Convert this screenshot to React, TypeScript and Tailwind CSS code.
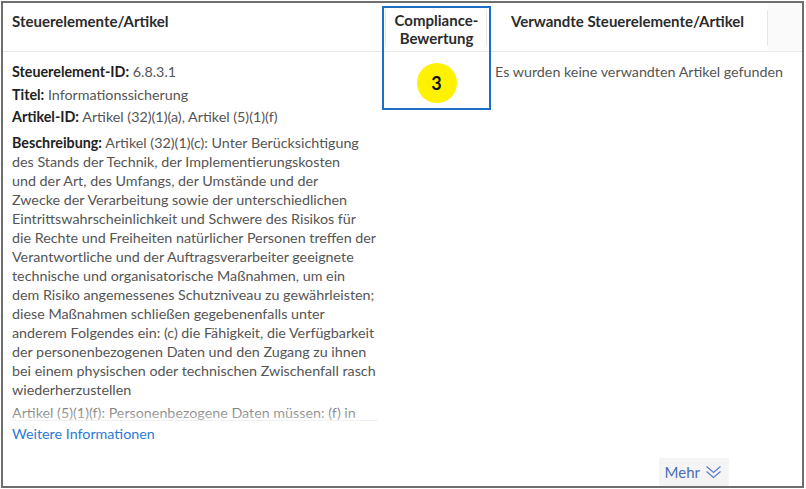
import React from 'react';

// Beschreibungstext, zeilenweise wie im Original umbrochen
const beschreibungZeilen = [
  'Artikel (32)(1)(c): Unter Berücksichtigung',
  'des Stands der Technik, der Implementierungskosten',
  'und der Art, des Umfangs, der Umstände und der',
  'Zwecke der Verarbeitung sowie der unterschiedlichen',
  'Eintrittswahrscheinlichkeit und Schwere des Risikos für',
  'die Rechte und Freiheiten natürlicher Personen treffen der',
  'Verantwortliche und der Auftragsverarbeiter geeignete',
  'technische und organisatorische Maßnahmen, um ein',
  'dem Risiko angemessenes Schutzniveau zu gewährleisten;',
  'diese Maßnahmen schließen gegebenenfalls unter',
  'anderem Folgendes ein: (c) die Fähigkeit, die Verfügbarkeit',
  'der personenbezogenen Daten und den Zugang zu ihnen',
  'bei einem physischen oder technischen Zwischenfall rasch',
  'wiederherzustellen',
];

const Divider = () => <span className="absolute right-0 top-[7px] h-[36px] w-px bg-[#e6e6e6]" />;

const App = () => {
  return (
    <div className="w-[806px] h-[489px] bg-white font-['Lato','Liberation_Sans',sans-serif]">
      <div className="relative ml-px mt-px flex h-[487px] w-[803px] flex-col border-2 border-[#6e6e6e] bg-white">
        {/* Kopfzeile */}
        <div className="grid h-[49px] grid-cols-[383px_101px_281px_1fr] border-b border-[#e8e8e8] text-[15px] font-bold text-[#2b2b2b]">
          <div className="relative pl-[9px] pt-[7px]">
            Steuerelemente/Artikel
            <Divider />
          </div>
          <div className="relative pt-[8px] text-center leading-[18px]">
            Compliance-
            <br />
            Bewertung
            <Divider />
          </div>
          <div className="relative whitespace-nowrap pt-[7px] text-center">
            Verwandte Steuerelemente/Artikel
            <Divider />
          </div>
          <div className="bg-[#fafafa]" />
        </div>

        {/* Inhalt */}
        <div className="grid flex-1 grid-cols-[383px_101px_281px_1fr] text-[14.3px] text-[#555]">
          <div className="pl-[9px] pr-[8px] pt-[10px]">
            <p className="leading-[20px]">
              <span className="font-bold text-[#222]">Steuerelement-ID:</span> 6.8.3.1
            </p>
            <p className="mt-[3px] leading-[20px]">
              <span className="font-bold text-[#222]">Titel:</span> Informationssicherung
            </p>
            <p className="mt-[2px] leading-[20px]">
              <span className="font-bold text-[#222]">Artikel-ID:</span> Artikel (32)(1)(a), Artikel (5)(1)(f)
            </p>
            <div className="relative mt-[6px] h-[288px] overflow-hidden border-b border-[#f0f0f0]">
              <p className="whitespace-nowrap leading-[19px]">
                <span className="font-bold text-[#222]">Beschreibung:</span>{' '}
                {beschreibungZeilen.map((zeile, i) => (
                  <React.Fragment key={i}>
                    {i > 0 && <br />}
                    {zeile}
                  </React.Fragment>
                ))}
              </p>
              <p className="mt-[4px] leading-[19px]">
                Artikel (5)(1)(f): Personenbezogene Daten müssen: (f) in einer Weise verarbeitet werden, die eine
                angemessene Sicherheit der personenbezogenen Daten gewährleistet
              </p>
              <div className="absolute bottom-0 left-0 right-0 h-[18px] bg-gradient-to-b from-white/10 to-white/55" />
            </div>
            <a className="mt-[3px] block leading-[20px] text-[#2b7bd6]">Weitere Informationen</a>
          </div>
          <div className="flex justify-center pt-[11px]">
            <div className="flex h-[40px] w-[40px] items-center justify-center rounded-full bg-[#fff200] text-[18px] font-bold text-[#111]">
              3
            </div>
          </div>
          <div className="whitespace-nowrap pl-[8px] pt-[10px] leading-[20px]">
            Es wurden keine verwandten Artikel gefunden
          </div>
          <div />
        </div>

        {/* Fußzeile */}
        <div className="flex h-[28px] justify-end pr-[73px]">
          <button className="flex h-[28px] items-center gap-[5px] bg-[#f4f4f4] pl-[6px] pr-[7px] text-[15px] text-[#4a6fb6]">
            Mehr
            <svg width="17" height="16" viewBox="0 0 17 16" fill="none" stroke="#5a7fd0" strokeWidth="1.3">
              <path d="M1.5 2.5 L8.5 8.5 L15.5 2.5" />
              <path d="M1.5 7.5 L8.5 13.5 L15.5 7.5" />
            </svg>
          </button>
        </div>

        {/* Auswahlrahmen Compliance-Spalte */}
        <div className="pointer-events-none absolute left-[379px] top-[3px] h-[104px] w-[109px] border-2 border-[#1e6ec4]" />
      </div>
    </div>
  );
};

export default App;
